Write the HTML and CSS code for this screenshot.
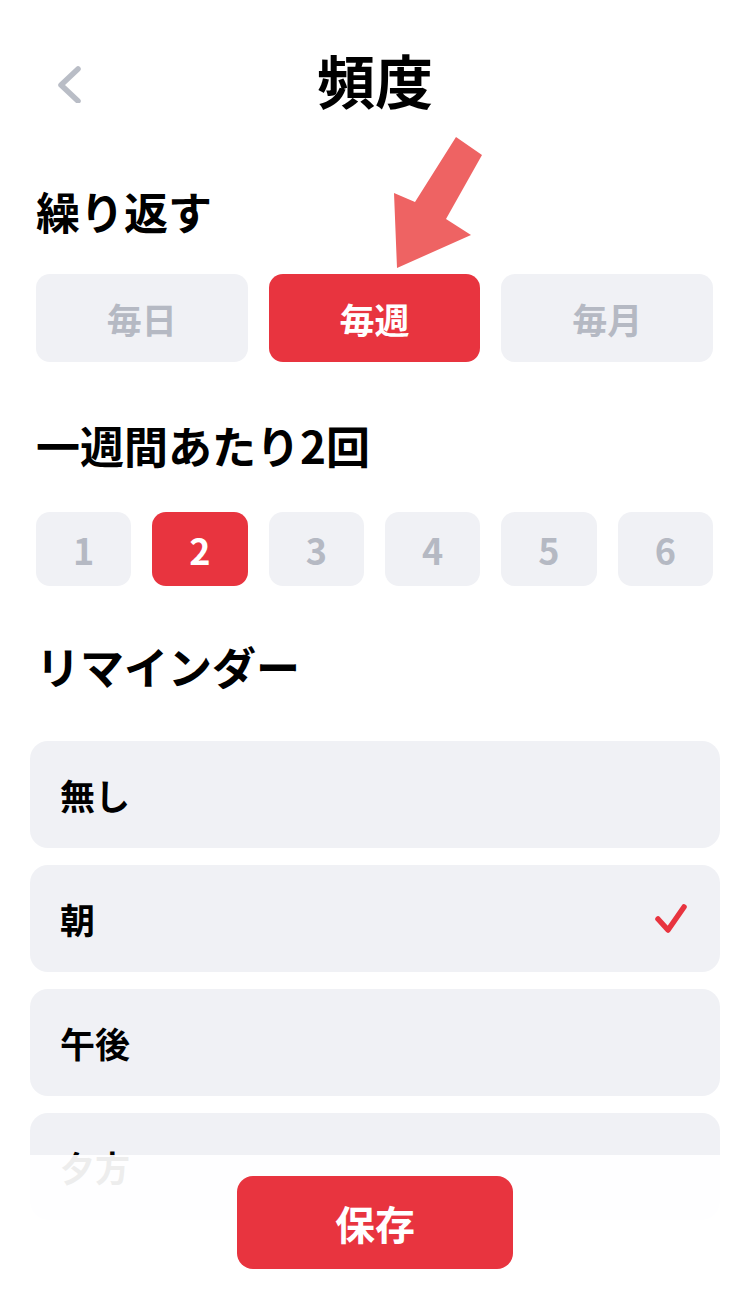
FILE: index.html
```html
<!DOCTYPE html>
<html lang="ja">
<head>
    <meta charset="UTF-8">
    <meta name="viewport" content="width=device-width, initial-scale=1.0">
    <title>頻度</title>
    <link rel="stylesheet" href="styles.css">
</head>
<body>

    <div class="screen">

        <!-- Header -->
        <div class="header">
            <button class="back" aria-label="戻る">
                <svg width="30" height="40" viewBox="0 0 30 40">
                    <polyline points="21,6 4,22 21,38" fill="none" stroke="#b9bdc6" stroke-width="5.5" stroke-linecap="round" stroke-linejoin="round"/>
                </svg>
            </button>
            <h1>頻度</h1>
        </div>

        <div class="content">
            <!-- Repeat -->
            <h2 class="section-title first">繰り返す</h2>
            <div class="segments">
                <button class="seg">毎日</button>
                <button class="seg active">毎週</button>
                <button class="seg">毎月</button>
            </div>

            <!-- Times per week -->
            <h2 class="section-title">一週間あたり2回</h2>
            <div class="counts">
                <button class="count">1</button>
                <button class="count active">2</button>
                <button class="count">3</button>
                <button class="count">4</button>
                <button class="count">5</button>
                <button class="count">6</button>
            </div>

            <!-- Reminder -->
            <h2 class="section-title reminder">リマインダー</h2>
            <div class="options">
                <div class="option">無し</div>
                <div class="option selected">
                    <span>朝</span>
                    <svg class="check" width="34" height="32" viewBox="0 0 34 32">
                        <polyline points="4,16 14,27 30,4" fill="none" stroke="#e8343f" stroke-width="5.5" stroke-linecap="round" stroke-linejoin="round"/>
                    </svg>
                </div>
                <div class="option">午後</div>
                <div class="option">夕方</div>
            </div>
        </div>

        <!-- annotation arrow -->
        <svg class="arrow" width="100" height="145" viewBox="0 0 100 145">
            <polygon points="66,7 92,25 56,89 81,105 7,138 4,63 25,72" fill="#ee6363"/>
        </svg>

        <!-- Save bar -->
        <div class="save-bar">
            <button class="save">保存</button>
        </div>
    </div>

</body>
</html>
```

FILE: styles.css
```css
* {
    box-sizing: border-box;
}
body {
    margin: 0;
    font-family: "Noto Sans CJK JP", "Noto Sans", sans-serif;
    background: white;
    color: #000;
}
button {
    font-family: inherit;
    border: none;
    cursor: pointer;
}
.screen {
    position: relative;
    height: 1294px;
    overflow: hidden;
}
.header {
    position: relative;
    display: flex;
    justify-content: center;
    padding-top: 50px;
}
.header h1 {
    margin: 0;
    font-size: 58px;
    line-height: 58px;
    font-weight: 700;
}
.back {
    position: absolute;
    left: 57px;
    top: 63px;
    background: none;
    padding: 0;
}
.content {
    padding: 0 37px 0 36px;
}
.section-title {
    margin: 61px 0 0;
    font-size: 44px;
    line-height: 44px;
    font-weight: 700;
}
.section-title.first {
    margin-top: 81px;
}
.section-title.reminder {
    margin-top: 58px;
}
.segments {
    display: grid;
    grid-template-columns: repeat(3, 1fr);
    gap: 21px;
    margin-top: 41px;
}
.seg {
    height: 88px;
    border-radius: 14px;
    background: #f0f1f5;
    color: #b5b9c3;
    font-size: 35px;
    font-weight: 700;
}
.counts {
    display: grid;
    grid-template-columns: repeat(6, 1fr);
    gap: 21px;
    margin-top: 45px;
}
.count {
    height: 74px;
    border-radius: 14px;
    background: #f0f1f5;
    color: #b5b9c3;
    font-size: 36px;
    font-weight: 700;
}
.seg.active,
.count.active {
    background: #e8343f;
    color: white;
}
.options {
    display: flex;
    flex-direction: column;
    gap: 17px;
    margin: 53px -7px 0 -6px;
}
.option {
    display: flex;
    align-items: center;
    justify-content: space-between;
    height: 107px;
    padding: 0 32px 0 30px;
    border-radius: 18px;
    background: #f0f1f5;
    font-size: 35px;
    font-weight: 700;
}
.arrow {
    position: absolute;
    left: 390px;
    top: 130px;
}
.save-bar {
    position: absolute;
    left: 0;
    right: 0;
    bottom: 0;
    height: 139px;
    display: flex;
    justify-content: center;
    padding-top: 21px;
    background: rgba(255, 255, 255, 0.93);
}
.save {
    width: 276px;
    height: 93px;
    border-radius: 16px;
    background: #e8343f;
    color: white;
    font-size: 40px;
    font-weight: 700;
}
```
